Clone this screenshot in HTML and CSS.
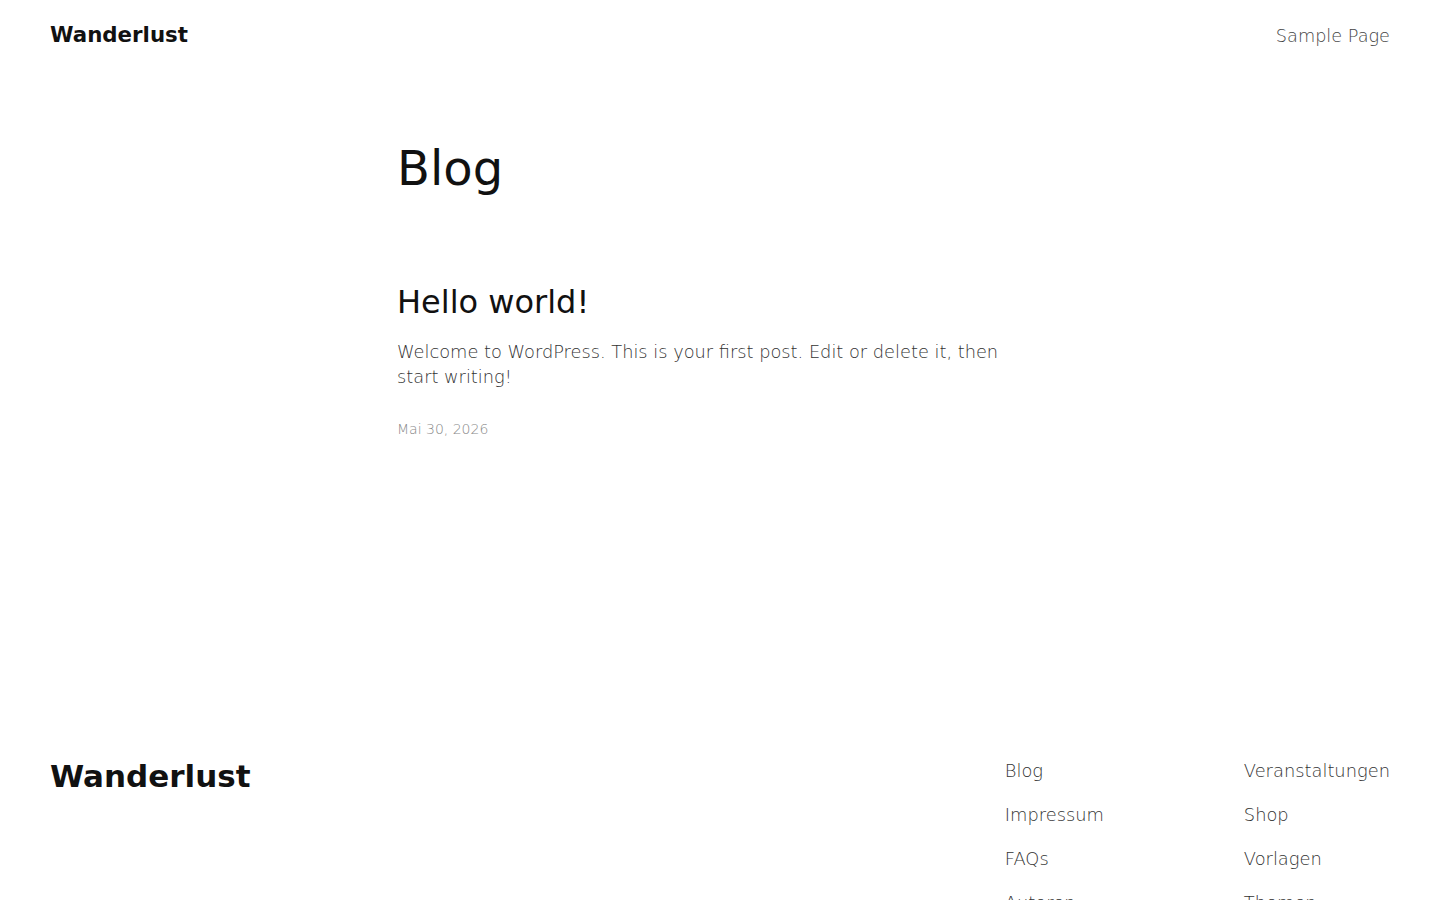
FILE: index.html
```html
<!DOCTYPE html>
<html lang="de">
<head>
<meta charset="utf-8">
<title>Blog – Wanderlust</title>
<link rel="stylesheet" href="styles.css">
</head>
<body>
<header class="site-header">
  <a class="site-title" href="#">Wanderlust</a>
  <nav class="site-nav"><a href="#">Sample Page</a></nav>
</header>
<main class="content">
  <h1 class="page-title">Blog</h1>
  <article class="post">
    <h2 class="post-title">Hello world!</h2>
    <p class="post-excerpt">Welcome to WordPress. This is your first post. Edit or delete it, then start writing!</p>
    <time class="post-date">Mai 30, 2026</time>
  </article>
</main>
<footer class="site-footer">
  <a class="footer-title" href="#">Wanderlust</a>
  <nav class="footer-nav">
    <ul class="footer-col">
      <li><a href="#">Blog</a></li>
      <li><a href="#">Impressum</a></li>
      <li><a href="#">FAQs</a></li>
      <li><a href="#">Autoren</a></li>
    </ul>
    <ul class="footer-col">
      <li><a href="#">Veranstaltungen</a></li>
      <li><a href="#">Shop</a></li>
      <li><a href="#">Vorlagen</a></li>
      <li><a href="#">Themen</a></li>
    </ul>
  </nav>
</footer>
</body>
</html>
```

FILE: styles.css
```css
html, body {
  margin: 0;
  padding: 0;
  background: #fff;
}
body {
  font-family: "DejaVu Sans", sans-serif;
  color: #111;
}
a {
  text-decoration: none;
  color: inherit;
}
.site-header {
  display: flex;
  justify-content: space-between;
  align-items: baseline;
  padding: 21px 50px 20px;
}
.site-title {
  font-weight: 700;
  font-size: 21.33px;
  line-height: 28px;
  color: #111;
}
.site-nav a {
  font-size: 17.7px;
  font-weight: 300;
  line-height: 28px;
  color: #444;
}
.content {
  width: 646px;
  margin: 0 auto;
  padding-top: 70px;
  padding-bottom: 318px;
}
.page-title {
  margin: 0;
  font-size: 48px;
  font-weight: 400;
  line-height: 1.2;
  color: #111;
}
.post {
  margin-top: 85px;
}
.post-title {
  margin: 0;
  font-size: 32px;
  font-weight: 400;
  line-height: 1.2;
  color: #111;
}
.post-excerpt {
  margin: 18px 0 0;
  font-size: 17.8px;
  font-weight: 300;
  line-height: 25.2px;
  color: #333;
}
.post-date {
  display: block;
  margin-top: 31px;
  font-size: 14px;
  font-weight: 300;
  line-height: 19.6px;
  color: #888;
}
.site-footer {
  display: flex;
  justify-content: space-between;
  align-items: flex-start;
  padding: 0 50px 40px;
}
.footer-title {
  font-size: 31px;
  font-weight: 700;
  line-height: 1.2;
  color: #111;
}
.footer-nav {
  display: grid;
  grid-template-columns: 239px auto;
}
.footer-col {
  list-style: none;
  margin: 0;
  padding: 0;
  display: flex;
  flex-direction: column;
  gap: 18.8px;
}
.footer-col a {
  font-size: 17.85px;
  font-weight: 300;
  line-height: 25.2px;
  color: #333;
}
```
